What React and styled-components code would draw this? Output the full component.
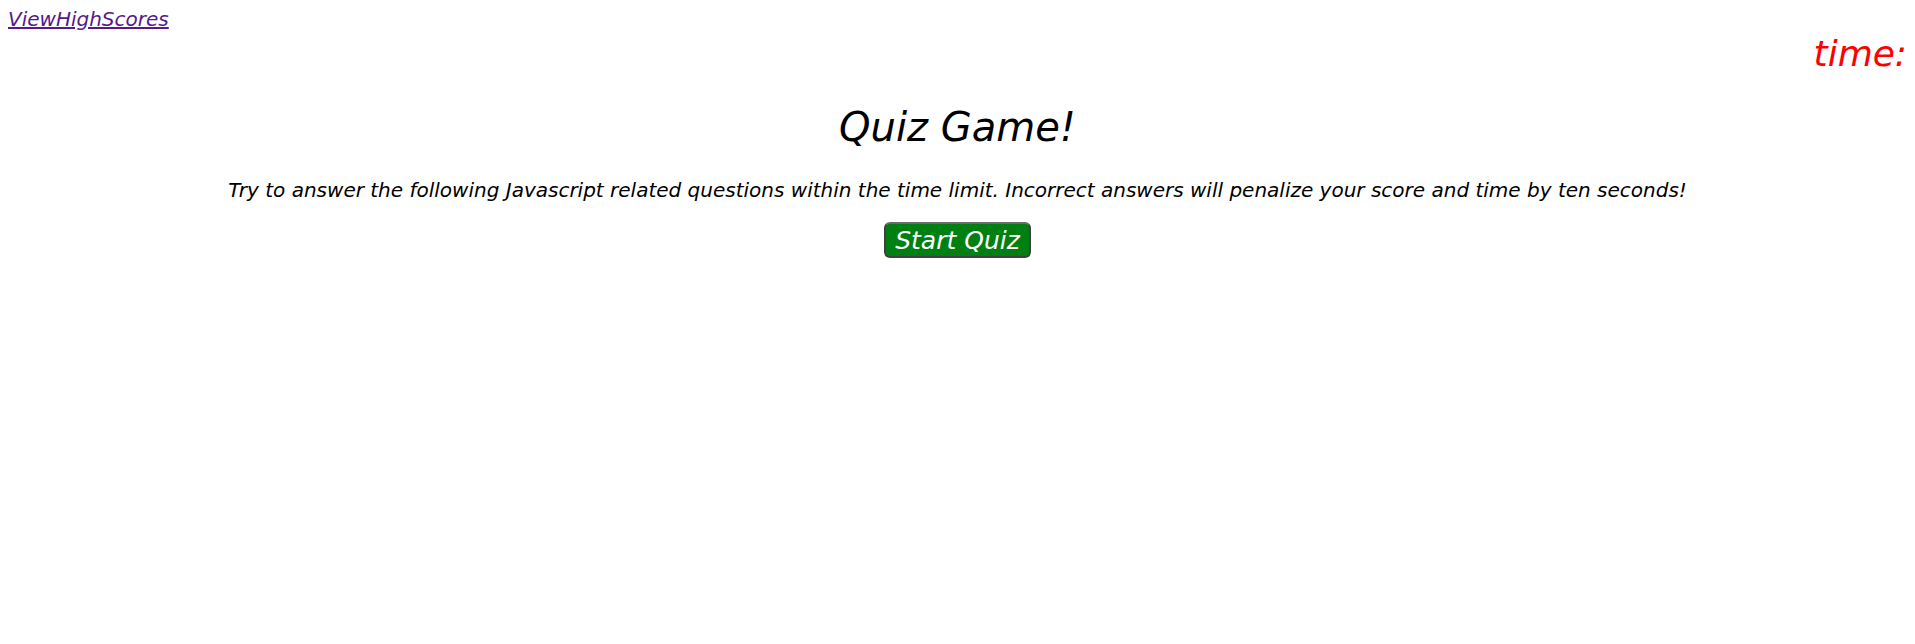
import React from "react";
import styled, { createGlobalStyle } from "styled-components";

const GlobalStyle = createGlobalStyle`
  body {
    margin: 8px;
    background: #ffffff;
    font-family: "DejaVu Sans", "Open Sans", sans-serif;
    font-style: italic;
  }
`;

const TopBar = styled.header`
  display: flex;
  flex-direction: column;
`;

const HighScoresLink = styled.a`
  align-self: flex-start;
  font-size: 20px;
  line-height: 22px;
  color: #551a8b;
  text-decoration: underline;
`;

const Timer = styled.div`
  align-self: flex-end;
  margin-top: 4px;
  font-size: 36px;
  line-height: 40px;
  color: #ff0000;
`;

const Main = styled.main`
  display: flex;
  flex-direction: column;
  align-items: center;
`;

const Title = styled.h1`
  margin: 27px 0 0;
  font-size: 40px;
  line-height: 52px;
  font-weight: 400;
  color: #000000;
`;

const Intro = styled.p`
  margin: 25px 0 0;
  font-size: 20px;
  line-height: 24px;
  color: #000000;
`;

const StartButton = styled.button`
  margin-top: 20px;
  width: 147px;
  height: 36px;
  padding: 0;
  font-family: inherit;
  font-style: italic;
  font-size: 25px;
  color: #ffffff;
  background: #008012;
  border: 2px solid #404040;
  border-top-color: #6a6a6a;
  border-radius: 6px;
  cursor: pointer;
`;

const App = () => {
  return (
    <>
      <GlobalStyle />
      <TopBar>
        <HighScoresLink href="#">ViewHighScores</HighScoresLink>
        <Timer>time:</Timer>
      </TopBar>
      <Main>
        <Title>Quiz Game!</Title>
        <Intro>
          Try to answer the following Javascript related questions within the time limit. Incorrect answers will penalize your score and time by ten seconds!
        </Intro>
        <StartButton>Start Quiz</StartButton>
      </Main>
    </>
  );
};

export default App;
